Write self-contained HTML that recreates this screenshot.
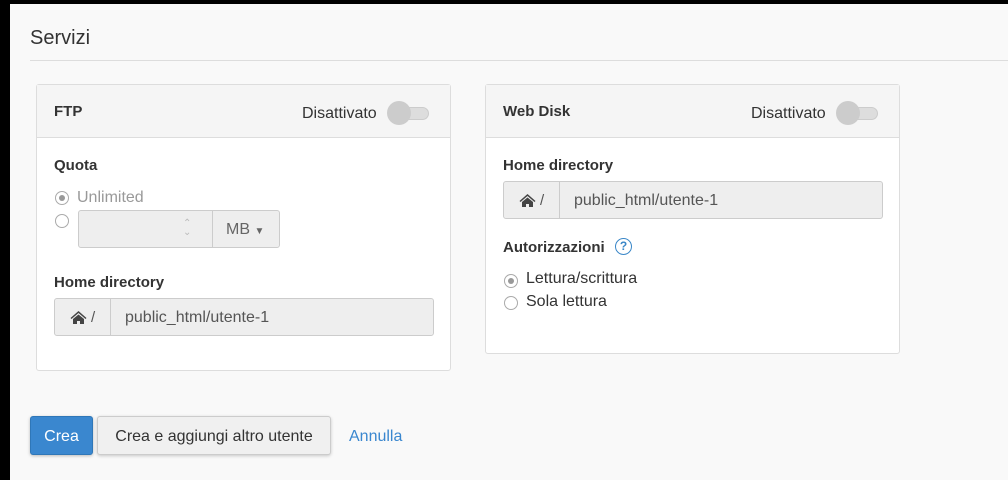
<!DOCTYPE html>
<html><head><style>
*{box-sizing:border-box;margin:0;padding:0}
body{width:1008px;height:480px;background:#000;position:relative;overflow:hidden;font-family:"Liberation Sans",sans-serif;color:#333}
.bg{position:absolute;left:10px;top:4px;right:0;bottom:0;background:#f9f9f9}
.a{position:absolute}
.panel{position:absolute;background:#fff;border:1px solid #ddd;border-radius:3px}
.ph{height:53px;background:#f5f5f5;border-bottom:1px solid #ddd;position:relative}
.ph b{position:absolute;left:17px;top:18px;font-size:15px}
.dis{position:absolute;top:20px;font-size:16px;color:#333}
.tog{position:absolute;top:16px;width:44px;height:22px}
.tog i{position:absolute;left:4px;top:6px;width:38px;height:13px;border-radius:7px;background:#ddd;border:1px solid #ccc}
.tog s{position:absolute;left:0;top:0;width:24px;height:24px;border-radius:50%;background:#ccc}
.lbl{position:absolute;font-size:15px;font-weight:bold}
.ig{position:absolute;height:38px;border:1px solid #ccc;border-radius:3px;background:#eee;display:flex}
.ig .ad{width:56px;border-right:1px solid #ccc;display:flex;align-items:center;justify-content:center;font-size:15px;color:#555}
.ig .v{padding-left:14px;line-height:38px;font-size:16px;color:#555}
.rad{position:absolute;width:14px;height:14px;border-radius:50%;border:1px solid #aaa;background:#fff}
.rad.on::after{content:"";position:absolute;left:3px;top:3px;width:6px;height:6px;border-radius:50%;background:#999}
.t{position:absolute;font-size:16px}
</style></head><body>
<div class="bg"></div>
<div class="a" style="left:30px;top:27px;font-size:20px;color:#333">Servizi</div>
<div class="a" style="left:30px;top:60px;right:0;height:1px;background:#ddd"></div>

<div class="panel" style="left:36px;top:84px;width:415px;height:287px">
 <div class="ph"><b>FTP</b><span class="dis" style="left:265px">Disattivato</span><div class="tog" style="left:350px"><i></i><s></s></div></div>
 <div class="lbl" style="left:17px;top:72px">Quota</div>
 <div class="rad on" style="left:18px;top:106px"></div>
 <div class="t" style="left:40px;top:104px;color:#999">Unlimited</div>
 <div class="rad" style="left:18px;top:129px"></div>
 <div class="a" style="left:41px;top:125px;width:202px;height:38px;border:1px solid #ccc;border-radius:3px;background:#eee;display:flex">
  <div style="width:134px;border-right:1px solid #ccc;position:relative"><span style="position:absolute;left:104px;top:8px;font-size:10px;color:#bbb;line-height:9px">&#8963;<br>&#8964;</span></div>
  <div style="flex:1;line-height:38px;padding-left:13px;font-size:16px;color:#666">MB <span style="font-size:10px">&#9660;</span></div>
 </div>
 <div class="lbl" style="left:17px;top:189px">Home directory</div>
 <div class="ig" style="left:17px;top:213px;width:380px"><div class="ad"><svg width="17" height="14" viewBox="0 0 17 14"><path d="M8.5 1L0.5 8l1 1 7-6 7 6 1-1zM3 9v5h4v-3h3v3h4V9L8.5 4.5z" fill="#444"/></svg>&nbsp;/</div><div class="v">public_html/utente-1</div></div>
</div>

<div class="panel" style="left:485px;top:84px;width:415px;height:270px">
 <div class="ph"><b>Web Disk</b><span class="dis" style="left:265px">Disattivato</span><div class="tog" style="left:350px"><i></i><s></s></div></div>
 <div class="lbl" style="left:17px;top:72px">Home directory</div>
 <div class="ig" style="left:17px;top:96px;width:380px"><div class="ad"><svg width="17" height="14" viewBox="0 0 17 14"><path d="M8.5 1L0.5 8l1 1 7-6 7 6 1-1zM3 9v5h4v-3h3v3h4V9L8.5 4.5z" fill="#444"/></svg>&nbsp;/</div><div class="v">public_html/utente-1</div></div>
 <div class="lbl" style="left:17px;top:154px">Autorizzazioni</div>
 <div class="a" style="left:129px;top:153px;width:17px;height:17px;border:1.5px solid #3a87c8;border-radius:50%;color:#3a87c8;font-size:12px;font-weight:bold;text-align:center;line-height:14px">?</div>
 <div class="rad on" style="left:18px;top:189px"></div>
 <div class="t" style="left:40px;top:185px">Lettura/scrittura</div>
 <div class="rad" style="left:18px;top:211px"></div>
 <div class="t" style="left:40px;top:208px">Sola lettura</div>
</div>

<div class="a" style="left:30px;top:416px;width:63px;height:39px;background:#3a87cf;border:1px solid #2f77b8;border-radius:3px;color:#fff;font-size:16px;line-height:39px;text-align:center;box-shadow:0 1px 3px rgba(0,0,0,.25)">Crea</div>
<div class="a" style="left:97px;top:416px;width:234px;height:39px;background:#f0f0f0;border:1px solid #ccc;border-radius:3px;color:#333;font-size:16px;line-height:39px;text-align:center;box-shadow:0 1px 3px rgba(0,0,0,.2)">Crea e aggiungi altro utente</div>
<div class="a" style="left:349px;top:428px;font-size:16px;color:#3a87cf">Annulla</div>
</body></html>
